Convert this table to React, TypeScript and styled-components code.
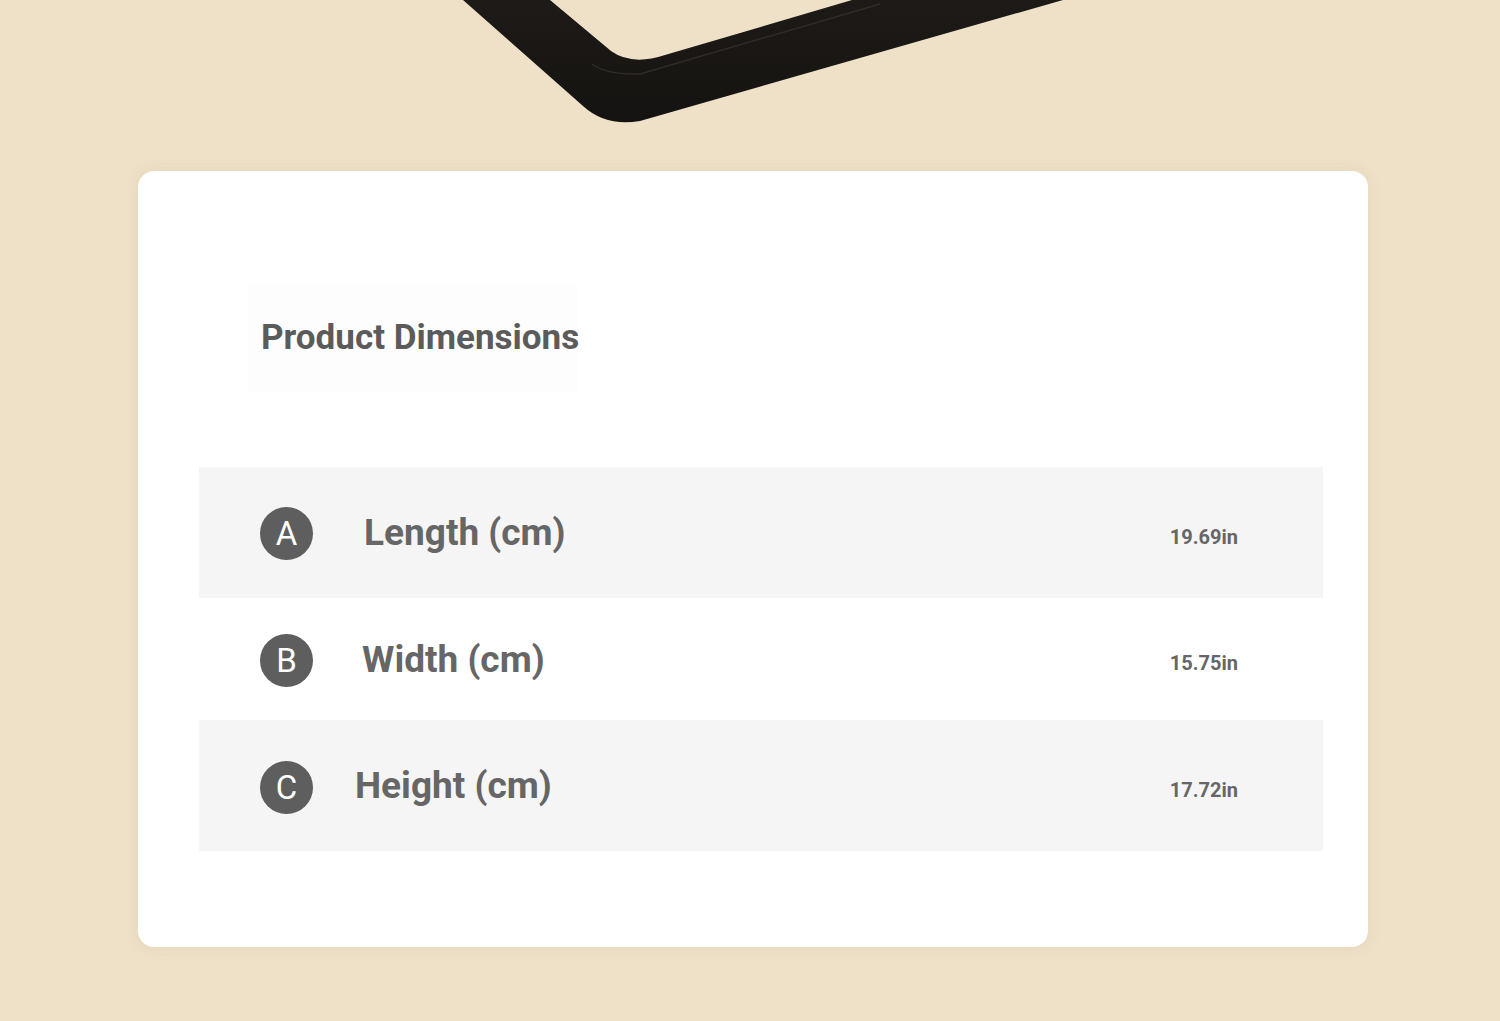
import styled, { createGlobalStyle } from "styled-components";

const GlobalStyle = createGlobalStyle`
  html, body {
    margin: 0;
    padding: 0;
    background: #eee1c8;
  }
  body {
    font-family: Roboto, "Liberation Sans", Arial, sans-serif;
    overflow: hidden;
  }
`;

const Page = styled.div`
  width: 1500px;
  height: 1021px;
  background: #eee1c8;
  display: flex;
  flex-direction: column;
`;

const FrameArea = styled.div`
  height: 171px;
  flex-shrink: 0;
  svg {
    display: block;
  }
`;

const Card = styled.section`
  margin-left: 138px;
  width: 1230px;
  height: 776px;
  box-sizing: border-box;
  background: #ffffff;
  border-radius: 16px;
  box-shadow: 0 0 14px rgba(190, 160, 110, 0.18);
  padding: 114px 45px 0 61px;
  display: flex;
  flex-direction: column;
`;

const TitleBox = styled.div`
  align-self: flex-start;
  margin-left: 49px;
  padding: 33px 0 34px 13px;
  width: 317px;
  background: #fdfdfd;
`;

const Title = styled.h2`
  margin: 0;
  font-size: 35px;
  line-height: 40px;
  font-weight: 700;
  color: #5b5b5b;
  white-space: nowrap;
`;

const Table = styled.div`
  margin-top: 75px;
  display: flex;
  flex-direction: column;
`;

const Row = styled.div<{ $shaded: boolean; $h: number }>`
  height: ${(p) => p.$h}px;
  display: flex;
  align-items: center;
  padding: 0 85px 0 61px;
  background: ${(p) => (p.$shaded ? "#f5f5f5" : "#ffffff")};
`;

const Badge = styled.span<{ $dy: number }>`
  width: 53px;
  height: 53px;
  border-radius: 50%;
  background: #5e5e5e;
  color: #ffffff;
  display: flex;
  align-items: center;
  justify-content: center;
  font-size: 33px;
  font-weight: 400;
  flex-shrink: 0;
  margin-top: ${(p) => p.$dy}px;
`;

const Label = styled.span<{ $indent: number }>`
  margin-left: ${(p) => p.$indent}px;
  font-size: 37px;
  font-weight: 700;
  color: #666666;
  white-space: nowrap;
`;

const Value = styled.span`
  margin-left: auto;
  padding-top: 8px;
  font-size: 20px;
  font-weight: 700;
  color: #666666;
`;

const rows = [
  { letter: "A", label: "Length (cm)", value: "19.69in", indent: 51, h: 131, shaded: true, dy: 1 },
  { letter: "B", label: "Width (cm)", value: "15.75in", indent: 49, h: 122, shaded: false, dy: 3 },
  { letter: "C", label: "Height (cm)", value: "17.72in", indent: 42, h: 131, shaded: true, dy: 4 },
];

function Frame() {
  return (
    <svg width="1500" height="171" viewBox="0 0 1500 171">
      <defs>
        <linearGradient id="frameFill" x1="0" y1="0" x2="0" y2="1">
          <stop offset="0" stopColor="#1d1a17" />
          <stop offset="1" stopColor="#151311" />
        </linearGradient>
      </defs>
      <path
        d="M463 0 L583 106 Q606 127 640 121 L1063 0 L852 0 L665 55 Q632 66 611 51 L550 0 Z"
        fill="url(#frameFill)"
      />
      <path
        d="M592 64 Q607 75 640 74 L880 4"
        fill="none"
        stroke="#3d3936"
        strokeWidth="1.5"
        opacity="0.6"
      />
    </svg>
  );
}

function App() {
  return (
    <Page>
      <GlobalStyle />
      <FrameArea>
        <Frame />
      </FrameArea>
      <Card>
        <TitleBox>
          <Title>Product Dimensions</Title>
        </TitleBox>
        <Table>
          {rows.map((r) => (
            <Row key={r.letter} $shaded={r.shaded} $h={r.h}>
              <Badge $dy={r.dy}>{r.letter}</Badge>
              <Label $indent={r.indent}>{r.label}</Label>
              <Value>{r.value}</Value>
            </Row>
          ))}
        </Table>
      </Card>
    </Page>
  );
}

export default App;
